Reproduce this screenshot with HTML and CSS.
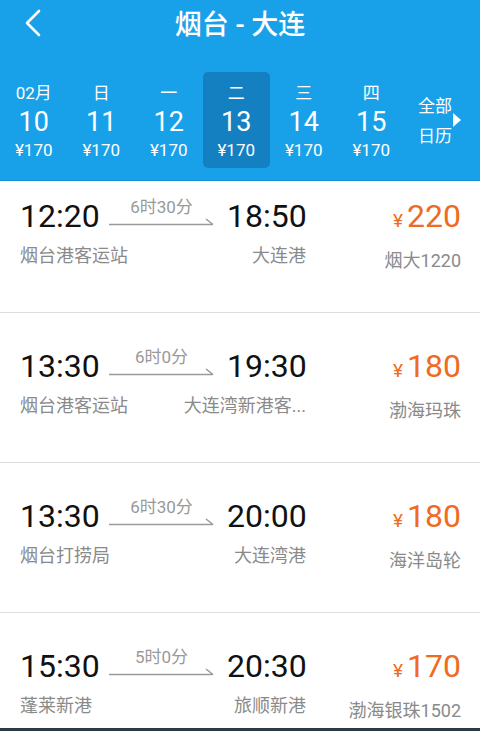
FILE: index.html
```html
<!DOCTYPE html>
<html lang="zh">
<head>
<meta charset="utf-8">
<title>烟台 - 大连</title>
<link rel="stylesheet" href="styles.css">
</head>
<body>
<div class="app">
  <header class="header">
    <div class="topbar">
      <span class="back">
        <svg width="20" height="30" viewBox="0 0 20 30"><polyline points="15,2 3,14 15,26" fill="none" stroke="#fff" stroke-width="2.6" stroke-linecap="round" stroke-linejoin="round"/></svg>
      </span>
      <h1 class="title">烟台 - 大连</h1>
    </div>
    <div class="dates">
      <div class="date"><span class="wd">02月</span><span class="dn">10</span><span class="dp">¥170</span></div>
      <div class="date"><span class="wd">日</span><span class="dn">11</span><span class="dp">¥170</span></div>
      <div class="date"><span class="wd">一</span><span class="dn">12</span><span class="dp">¥170</span></div>
      <div class="date sel"><span class="wd">二</span><span class="dn">13</span><span class="dp">¥170</span></div>
      <div class="date"><span class="wd">三</span><span class="dn">14</span><span class="dp">¥170</span></div>
      <div class="date"><span class="wd">四</span><span class="dn">15</span><span class="dp">¥170</span></div>
      <div class="all">
        <span class="all-text">全部<br>日历</span>
        <span class="tri"></span>
      </div>
    </div>
  </header>
  <main class="list">
    <div class="row first">
      <div class="trip">
        <div class="line">
          <span class="time">12:20</span>
          <span class="dur"><span class="dur-t">6时30分</span><svg width="105" height="10" viewBox="0 0 105 10"><path d="M0 7.5H104M97 2L104 7.5" fill="none" stroke="#9a9a9a" stroke-width="1.5"/></svg></span>
          <span class="time">18:50</span>
        </div>
        <div class="stations"><span class="st">烟台港客运站</span><span class="st arr">大连港</span></div>
      </div>
      <div class="fare"><div class="price"><span class="yen">¥</span>220</div><div class="ship">烟大1220</div></div>
    </div>
    <div class="row">
      <div class="trip">
        <div class="line">
          <span class="time">13:30</span>
          <span class="dur"><span class="dur-t">6时0分</span><svg width="105" height="10" viewBox="0 0 105 10"><path d="M0 7.5H104M97 2L104 7.5" fill="none" stroke="#9a9a9a" stroke-width="1.5"/></svg></span>
          <span class="time">19:30</span>
        </div>
        <div class="stations"><span class="st">烟台港客运站</span><span class="st arr">大连湾新港客...</span></div>
      </div>
      <div class="fare"><div class="price"><span class="yen">¥</span>180</div><div class="ship">渤海玛珠</div></div>
    </div>
    <div class="row">
      <div class="trip">
        <div class="line">
          <span class="time">13:30</span>
          <span class="dur"><span class="dur-t">6时30分</span><svg width="105" height="10" viewBox="0 0 105 10"><path d="M0 7.5H104M97 2L104 7.5" fill="none" stroke="#9a9a9a" stroke-width="1.5"/></svg></span>
          <span class="time">20:00</span>
        </div>
        <div class="stations"><span class="st">烟台打捞局</span><span class="st arr">大连湾港</span></div>
      </div>
      <div class="fare"><div class="price"><span class="yen">¥</span>180</div><div class="ship">海洋岛轮</div></div>
    </div>
    <div class="row">
      <div class="trip">
        <div class="line">
          <span class="time">15:30</span>
          <span class="dur"><span class="dur-t">5时0分</span><svg width="105" height="10" viewBox="0 0 105 10"><path d="M0 7.5H104M97 2L104 7.5" fill="none" stroke="#9a9a9a" stroke-width="1.5"/></svg></span>
          <span class="time">20:30</span>
        </div>
        <div class="stations"><span class="st">蓬莱新港</span><span class="st arr">旅顺新港</span></div>
      </div>
      <div class="fare"><div class="price"><span class="yen">¥</span>170</div><div class="ship">渤海银珠1502</div></div>
    </div>
  </main>
  <footer class="bottom"></footer>
</div>
</body>
</html>
```
FILE: styles.css
```css
* { box-sizing: border-box; }
html, body { margin: 0; padding: 0; }
body {
  width: 480px;
  height: 731px;
  overflow: hidden;
  background: #fff;
  font-family: Roboto, "Noto Sans CJK SC", sans-serif;
}
.app {
  display: flex;
  flex-direction: column;
  height: 731px;
}
.header {
  background: #18a1e9;
  color: #fff;
  height: 181px;
  flex: none;
  border-bottom: 1px solid #1590d2;
}
.topbar {
  position: relative;
  height: 50px;
  display: flex;
  align-items: center;
  justify-content: center;
}
.back {
  position: absolute;
  left: 24px;
  top: 9px;
  display: flex;
}
.title {
  margin: 0;
  font-size: 27px;
  font-weight: 500;
  line-height: 48px;
  letter-spacing: 0;
}
.dates {
  display: flex;
  margin-top: 22px;
  height: 96px;
}
.date {
  width: 67.5px;
  flex: none;
  display: flex;
  flex-direction: column;
  align-items: center;
  border-radius: 5px;
  padding-top: 9px;
}
.date.sel {
  background: #1480c1;
}
.wd {
  font-size: 17px;
  line-height: 24px;
}
.dn {
  font-size: 27px;
  line-height: 30px;
  margin-top: 2px;
}
.dp {
  font-size: 17px;
  line-height: 22px;
  margin-top: 2px;
}
.all {
  flex: 1;
  display: flex;
  align-items: center;
  padding-left: 13px;
  padding-top: 2px;
}
.all-text {
  font-size: 17px;
  line-height: 30px;
}
.tri {
  width: 0;
  height: 0;
  border-top: 7px solid transparent;
  border-bottom: 7px solid transparent;
  border-left: 8px solid #fff;
  margin-left: 1px;
  margin-bottom: 2px;
}
.list {
  flex: 1;
  overflow: hidden;
}
.row {
  height: 150px;
  border-bottom: 1px solid #dedede;
  display: flex;
  justify-content: space-between;
  padding: 33px 19px 0 20px;
}
.row.first {
  height: 132px;
  padding-top: 15px;
}
.trip {
  width: 287px;
  display: flex;
  flex-direction: column;
}
.line {
  display: flex;
  height: 40px;
  align-items: center;
}
.time {
  font-size: 32px;
  line-height: 40px;
  color: #111;
  width: 80px;
  flex: none;
}
.dur {
  align-self: flex-start;
  width: 105px;
  margin: 1px 13px 0 9px;
  display: flex;
  flex-direction: column;
  align-items: center;
}
.dur svg { display: block; }
.dur-t {
  font-size: 17px;
  line-height: 20px;
  color: #999;
}
.stations {
  margin-top: 8px;
  display: flex;
  justify-content: space-between;
  font-size: 18px;
  line-height: 24px;
  color: #8a8a8a;
}
.st.arr {
  margin-right: 1px;
}
.fare {
  display: flex;
  flex-direction: column;
  align-items: flex-end;
}
.price {
  font-size: 32px;
  line-height: 40px;
  color: #ef6b21;
}
.yen {
  font-size: 19px;
  margin-right: 4px;
}
.ship {
  margin-top: 8px;
  font-size: 18px;
  line-height: 24px;
  color: #8a8a8a;
}
.bottom {
  height: 3px;
  flex: none;
  background: #2b3a44;
}
```
